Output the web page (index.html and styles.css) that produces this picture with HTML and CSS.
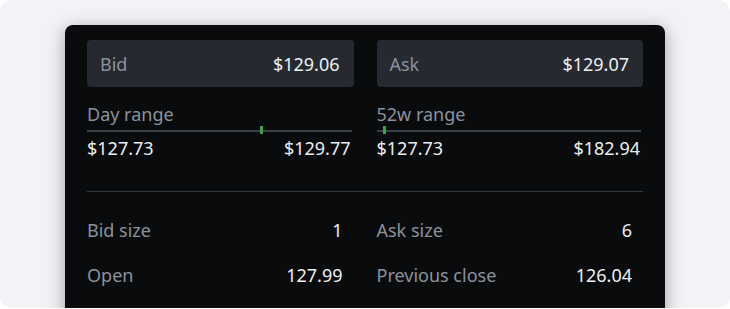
FILE: index.html
```html
<!DOCTYPE html>
<html lang="en">
<head>
    <meta charset="UTF-8">
    <meta name="viewport" content="width=device-width, initial-scale=1.0">
    <title>Quote Details</title>
    <link rel="stylesheet" href="styles.css">
</head>
<body>
    <div class="backdrop">
        <div class="quote-card">
            <div class="columns">
                <div class="column">
                    <div class="price-box">
                        <span class="label">Bid</span>
                        <span class="value">$129.06</span>
                    </div>
                    <div class="range">
                        <div class="label">Day range</div>
                        <div class="track">
                            <span class="marker" style="left: 65.5%"></span>
                        </div>
                        <div class="range-values">
                            <span>$127.73</span>
                            <span>$129.77</span>
                        </div>
                    </div>
                </div>
                <div class="column">
                    <div class="price-box">
                        <span class="label">Ask</span>
                        <span class="value">$129.07</span>
                    </div>
                    <div class="range">
                        <div class="label">52w range</div>
                        <div class="track">
                            <span class="marker" style="left: 2.5%"></span>
                        </div>
                        <div class="range-values">
                            <span>$127.73</span>
                            <span>$182.94</span>
                        </div>
                    </div>
                </div>
            </div>
            <hr class="divider">
            <div class="columns stats">
                <div class="column">
                    <div class="stat-row">
                        <span class="label">Bid size</span>
                        <span class="value">1</span>
                    </div>
                    <div class="stat-row">
                        <span class="label">Open</span>
                        <span class="value">127.99</span>
                    </div>
                </div>
                <div class="column">
                    <div class="stat-row">
                        <span class="label">Ask size</span>
                        <span class="value">6</span>
                    </div>
                    <div class="stat-row">
                        <span class="label">Previous close</span>
                        <span class="value">126.04</span>
                    </div>
                </div>
            </div>
        </div>
    </div>
</body>
</html>
```

FILE: styles.css
```css
/* General Styles */
* {
    box-sizing: border-box;
    margin: 0;
    padding: 0;
}

body {
    background-color: #ffffff;
    font-family: 'Noto Sans', 'Open Sans', sans-serif;
    font-size: 18px;
    line-height: 24px;
    color: #eceef1;
    height: 309px;
    overflow: hidden;
}

.backdrop {
    background-color: #f2f2f7;
    border-radius: 12px;
    height: 308px;
    padding: 25px 65px 0;
    overflow: hidden;
}

/* Dark quote card */
.quote-card {
    background-color: #0a0b0d;
    border-radius: 8px;
    padding: 15px 22px 40px;
    min-height: 320px;
    box-shadow: 0 4px 18px rgba(0, 0, 0, 0.35);
}

.columns {
    display: grid;
    grid-template-columns: 1fr 1fr;
    column-gap: 23px;
}

.label {
    color: #8b929c;
}

.value {
    color: #eceef1;
}

.price-box {
    display: flex;
    justify-content: space-between;
    align-items: center;
    height: 47px;
    padding: 0 14px 0 13px;
    background-color: #262a30;
    border-radius: 4px;
}

.range {
    margin-top: 15px;
    padding-right: 2px;
}

.track {
    position: relative;
    height: 2px;
    margin-top: 4px;
    background-color: #3a3f47;
}

/* current price tick on the track */
.marker {
    position: absolute;
    top: -4px;
    width: 3px;
    height: 8px;
    background-color: #3fa34d;
}

.range-values {
    display: flex;
    justify-content: space-between;
    margin-top: 4px;
    padding-right: 1px;
}

.divider {
    border: none;
    height: 1px;
    background-color: #33373e;
    margin: 31px 0 26px;
}

.stat-row {
    display: flex;
    justify-content: space-between;
    padding-right: 11px;
    height: 45px;
}
```
